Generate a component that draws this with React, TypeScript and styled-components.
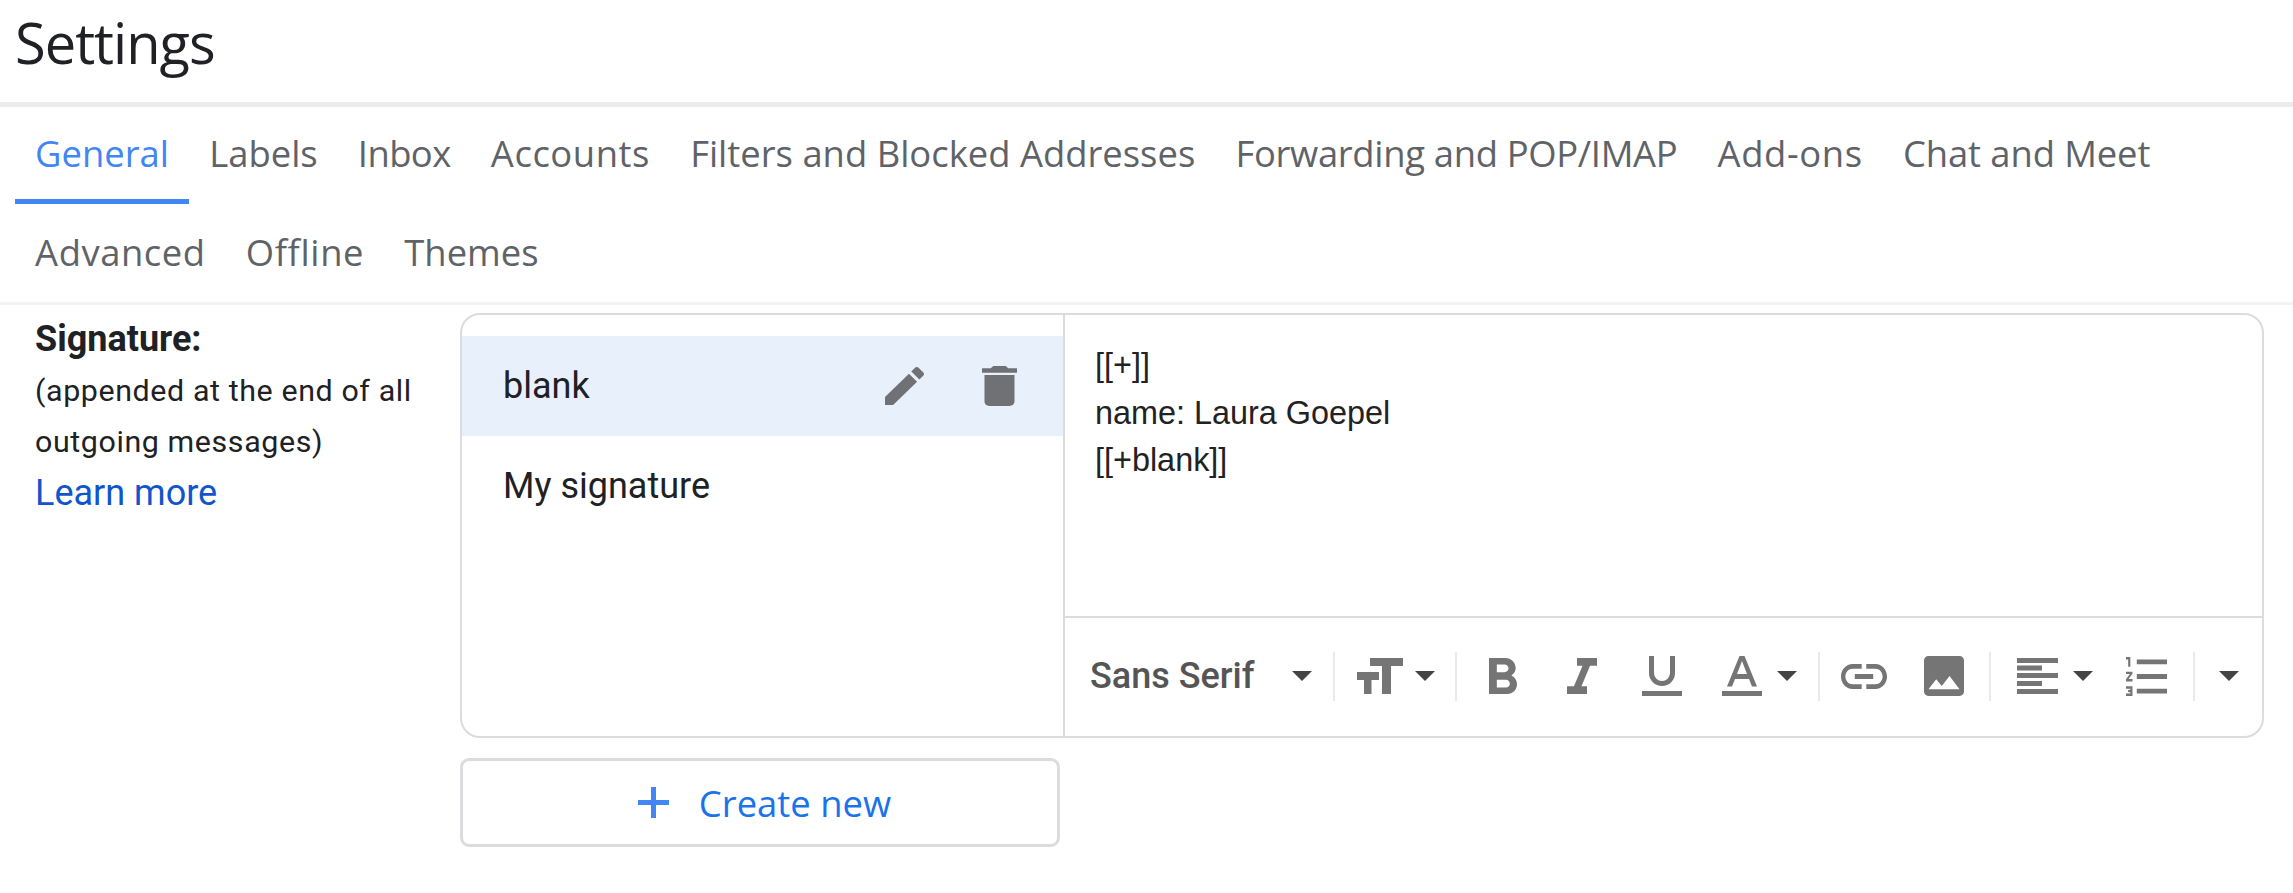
import React from 'react';
import styled, { createGlobalStyle } from 'styled-components';

const GlobalStyle = createGlobalStyle`
    html, body {
        margin: 0;
        padding: 0;
        background: #fff;
        overflow: hidden;
    }
    body {
        font-family: Roboto, "Liberation Sans", sans-serif;
        color: #202124;
    }
`;

const Page = styled.div`
    width: 2293px;
    height: 893px;
    display: flex;
    flex-direction: column;
`;

const Header = styled.header`
    height: 102px;
    flex: none;
    padding-left: 15px;
    display: flex;
    align-items: center;
    box-sizing: content-box;
    border-bottom: 5px solid #ececec;
`;

const Title = styled.h1`
    margin: 0 0 18px;
    font: 400 56px "Open Sans", sans-serif;
    letter-spacing: -1px;
    color: #202124;
`;

const TabBar = styled.nav`
    height: 195px;
    padding-left: 15px;
    box-sizing: content-box;
    border-bottom: 3px solid #f1f3f4;
    display: flex;
    flex-wrap: wrap;
    align-content: flex-start;
`;

const Tab = styled.div<{ $active?: boolean; $tracking?: number }>`
    height: 97px;
    padding: 0 20.1px;
    box-sizing: border-box;
    display: flex;
    align-items: center;
    font: 500 36.4px "Open Sans", sans-serif;
    letter-spacing: ${({ $tracking }) => $tracking ?? 0}px;
    color: ${({ $active }) => ($active ? '#4285f4' : '#5f6368')};
    border-bottom: 5px solid ${({ $active }) => ($active ? '#4285f4' : 'transparent')};
`;

const TabBreak = styled.div`
    flex-basis: 100%;
    height: 2px;
`;

const Content = styled.main`
    display: grid;
    grid-template-columns: 460px 1804px;
    padding-top: 8px;
`;

const Side = styled.aside`
    padding: 0 0 0 35px;
`;

const SideTitle = styled.div`
    font-size: 36px;
    font-weight: 700;
    line-height: 52px;
`;

const SideNote = styled.div`
    font-size: 30.4px;
    line-height: 51px;
    letter-spacing: 0.6px;
`;

const SideLink = styled.a`
    display: block;
    margin-top: 1px;
    font-size: 36px;
    line-height: 50px;
    color: #1155cc;
`;

const Main = styled.div`
    display: flex;
    flex-direction: column;
`;

const Card = styled.section`
    height: 425px;
    box-sizing: border-box;
    border: 2px solid #dadce0;
    border-radius: 20px;
    display: flex;
    overflow: hidden;
`;

const List = styled.div`
    width: 601px;
    flex: none;
    padding-top: 21px;
    border-right: 2px solid #dadce0;
`;

const ListItem = styled.div<{ $selected?: boolean }>`
    height: 100px;
    padding: 0 46px 0 41px;
    display: flex;
    align-items: center;
    justify-content: space-between;
    font-size: 36px;
    background: ${({ $selected }) => ($selected ? '#e8f0fb' : 'transparent')};
`;

const ItemActions = styled.div`
    display: flex;
    align-items: center;
    gap: 58px;
    color: #6f7175;
`;

const Editor = styled.div`
    flex: 1;
    display: flex;
    flex-direction: column;
`;

const EditorBody = styled.div`
    height: 303px;
    flex: none;
    box-sizing: border-box;
    padding: 27px 0 0 30px;
    border-bottom: 2px solid #dadce0;
    font: 32.4px/47.5px "Liberation Sans", Arial, sans-serif;
    color: #222;
`;

const Toolbar = styled.div`
    flex: 1;
    display: flex;
    align-items: center;
    padding-bottom: 2px;
    color: #757575;
`;

const Separator = styled.div`
    width: 2px;
    height: 49px;
    flex: none;
    background: #e8eaed;
`;

const Tool = styled.div<{ $left: number; $right?: number; $gap?: number }>`
    margin: 0 ${({ $right }) => $right ?? 0}px 0 ${({ $left }) => $left}px;
    flex: none;
    display: flex;
    align-items: center;
    gap: ${({ $gap }) => $gap ?? 0}px;
`;

const FontSelect = styled.div`
    width: 268px;
    flex: none;
    box-sizing: border-box;
    padding: 0 21px 0 25px;
    display: flex;
    align-items: center;
    justify-content: space-between;
    font-size: 36px;
    font-weight: 500;
    color: #555;
`;

const Arrow = styled.span`
    width: 0;
    height: 0;
    flex: none;
    border-left: 10px solid transparent;
    border-right: 10px solid transparent;
    border-top: 10px solid #444;
`;

const CreateButton = styled.button`
    width: 600px;
    height: 89px;
    margin-top: 20px;
    box-sizing: border-box;
    border: 3px solid #dadce0;
    border-radius: 9px;
    background: #fff;
    display: flex;
    align-items: center;
    justify-content: center;
    gap: 30px;
    padding: 0 0 0 9px;
    font: 500 36.4px "Open Sans", sans-serif;
    color: #1a73e8;
`;

const Glyph = ({ box, w, h, d, fill }: { box: string; w: number; h: number; d: string; fill?: string }) => (
    <svg width={w} height={h} viewBox={box} preserveAspectRatio="none" fill={fill ?? 'currentColor'} fillRule="evenodd">
        <path d={d} />
    </svg>
);

const PENCIL =
    'M3 17.25V21h3.75L17.81 9.94l-3.75-3.75L3 17.25zM20.71 7.04c.39-.39.39-1.02 0-1.41l-2.34-2.34c-.39-.39-1.02-.39-1.41 0l-1.83 1.83 3.75 3.75 1.83-1.83z';
const TRASH = 'M6 19c0 1.1.9 2 2 2h8c1.1 0 2-.9 2-2V7H6v12zM19 4h-3.5l-1-1h-5l-1 1H5v2h14V4z';
const TEXT_SIZE = 'M13 0h33v8H34v28h-9V8H13zM0 14h22v8h-7.5v14H7V22H0z';
const BOLD =
    'M15.6 10.79c.97-.67 1.65-1.77 1.65-2.79 0-2.26-1.75-4-4-4H7v14h7.04c2.09 0 3.71-1.7 3.71-3.79 0-1.52-.86-2.82-2.15-3.42zM10 6.5h3c.83 0 1.5.67 1.5 1.5s-.67 1.5-1.5 1.5h-3v-3zm3.5 9H10v-3h3.5c.83 0 1.5.67 1.5 1.5s-.67 1.5-1.5 1.5z';
const ITALIC = 'M10 4v3h2.21l-3.42 8H6v3h8v-3h-2.21l3.42-8H18V4z';
const UNDERLINE = 'M7 0h5v17a8 8 0 0 0 16 0V0h5v17a13 13 0 0 1-26 0zM0 35h40v5H0z';
const TEXT_COLOR = 'M17.5 0h5L35 30.5h-5L27 23H13l-3 7.5H5zM15 18h10L20 5zM0 35h40v5H0z';
const LINK =
    'M3.9 12c0-1.71 1.39-3.1 3.1-3.1h4V7H7c-2.76 0-5 2.24-5 5s2.24 5 5 5h4v-1.9H7c-1.71 0-3.1-1.39-3.1-3.1zM8 13h8v-2H8v2zm9-6h-4v1.9h4c1.71 0 3.1 1.39 3.1 3.1s-1.39 3.1-3.1 3.1h-4V17h4c2.76 0 5-2.24 5-5s-2.24-5-5-5z';
const IMAGE =
    'M21 19V5c0-1.1-.9-2-2-2H5c-1.1 0-2 .9-2 2v14c0 1.1.9 2 2 2h14c1.1 0 2-.9 2-2zM8.5 13.5l2.5 3.01L14.5 12l4.5 6H5l3.5-4.5z';
const ALIGN = 'M0 0h41v5H0zM0 7.5h25v5H0zM0 15h41v5H0zM0 23h25v5H0zM0 31h41v5H0z';
const NUMBERED =
    'M2 17h2v.5H3v1h1v.5H2v1h3v-4H2v1zm1-9h1V4H2v1h1v3zm-1 3h1.8L2 13.1v.9h3v-1H3.2L5 10.9V10H2v1zm5-6v2h14V5H7zm0 14h14v-2H7v2zm0-6h14v-2H7v2z';
const PLUS = 'M13 0h5v13h13v5H18v13h-5V18H0v-5h13z';

const tabs: [string, number][] = [
    ['General', 0],
    ['Labels', 0],
    ['Inbox', -0.58],
    ['Accounts', 0.55],
    ['Filters and Blocked Addresses', 0],
    ['Forwarding and POP/IMAP', -0.32],
    ['Add-ons', 0.63],
    ['Chat and Meet', -0.11],
];
const moreTabs: [string, number][] = [
    ['Advanced', 0.55],
    ['Offline', 0.63],
    ['Themes', 0],
];

const App = () => {
    return (
        <Page>
            <GlobalStyle />
            <Header>
                <Title>Settings</Title>
            </Header>
            <TabBar>
                {tabs.map(([t, tracking], i) => (
                    <Tab key={t} $active={i === 0} $tracking={tracking}>
                        {t}
                    </Tab>
                ))}
                <TabBreak />
                {moreTabs.map(([t, tracking]) => (
                    <Tab key={t} $tracking={tracking}>
                        {t}
                    </Tab>
                ))}
            </TabBar>
            <Content>
                <Side>
                    <SideTitle>Signature:</SideTitle>
                    <SideNote>(appended at the end of all outgoing messages)</SideNote>
                    <SideLink>Learn more</SideLink>
                </Side>
                <Main>
                    <Card>
                        <List>
                            <ListItem $selected>
                                blank
                                <ItemActions>
                                    <Glyph box="3 3 18 18" w={39} h={38} d={PENCIL} />
                                    <Glyph box="5 3 14 18" w={35} h={40} d={TRASH} />
                                </ItemActions>
                            </ListItem>
                            <ListItem>My signature</ListItem>
                        </List>
                        <Editor>
                            <EditorBody>
                                [[+]]
                                <br />
                                name: Laura Goepel
                                <br />
                                [[+blank]]
                            </EditorBody>
                            <Toolbar>
                                <FontSelect>
                                    Sans Serif
                                    <Arrow />
                                </FontSelect>
                                <Separator />
                                <Tool $left={22} $right={20} $gap={12}>
                                    <Glyph box="0 0 46 36" w={46} h={36} d={TEXT_SIZE} />
                                    <Arrow />
                                </Tool>
                                <Separator />
                                <Tool $left={32}>
                                    <Glyph box="7 4 10.75 14" w={28} h={36} d={BOLD} />
                                </Tool>
                                <Tool $left={50}>
                                    <Glyph box="6 4 12 14" w={30} h={36} d={ITALIC} />
                                </Tool>
                                <Tool $left={45}>
                                    <Glyph box="0 0 40 40" w={40} h={40} d={UNDERLINE} />
                                </Tool>
                                <Tool $left={40} $right={21} $gap={15}>
                                    <Glyph box="0 0 40 40" w={40} h={40} d={TEXT_COLOR} />
                                    <Arrow />
                                </Tool>
                                <Separator />
                                <Tool $left={21}>
                                    <Glyph box="2 7 20 10" w={46} h={25} d={LINK} />
                                </Tool>
                                <Tool $left={37} $right={25}>
                                    <Glyph box="3 3 18 18" w={40} h={40} d={IMAGE} />
                                </Tool>
                                <Separator />
                                <Tool $left={26} $gap={15}>
                                    <Glyph box="0 0 41 36" w={41} h={36} d={ALIGN} />
                                    <Arrow />
                                </Tool>
                                <Tool $left={33} $right={26}>
                                    <Glyph box="2 4 19 16" w={41} h={39} d={NUMBERED} />
                                </Tool>
                                <Separator />
                                <Tool $left={24}>
                                    <Arrow />
                                </Tool>
                            </Toolbar>
                        </Editor>
                    </Card>
                    <CreateButton>
                        <Glyph box="0 0 31 31" w={31} h={31} d={PLUS} fill="#4285f4" />
                        Create new
                    </CreateButton>
                </Main>
            </Content>
        </Page>
    );
};

export default App;
